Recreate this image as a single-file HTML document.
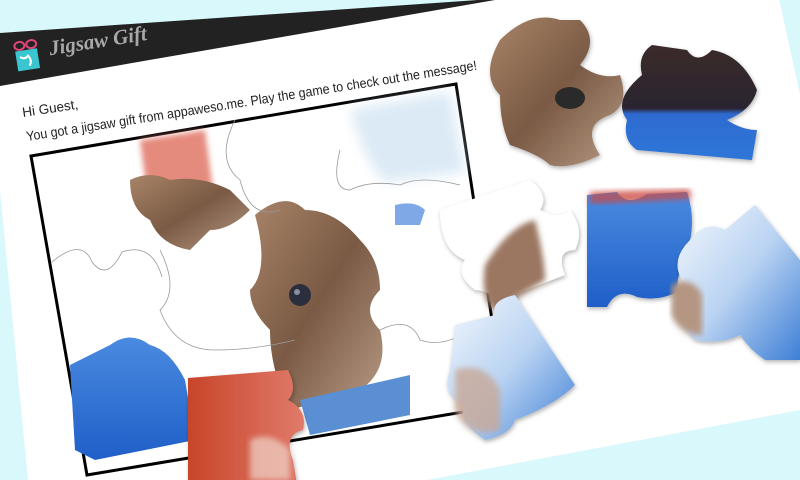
<!DOCTYPE html>
<html><head><meta charset="utf-8"><style>
html,body{margin:0;padding:0;width:800px;height:480px;overflow:hidden;background:#d9f8fb}
svg{display:block}
</style></head><body>
<svg width="800" height="480" viewBox="0 0 800 480" xmlns="http://www.w3.org/2000/svg">
<defs>
<filter id="b3"><feGaussianBlur stdDeviation="3"/></filter>
<filter id="b6"><feGaussianBlur stdDeviation="6"/></filter>
<filter id="sh" x="-20%" y="-20%" width="140%" height="140%"><feDropShadow dx="1" dy="2" stdDeviation="2" flood-opacity="0.3"/></filter>
<linearGradient id="red" x1="0" y1="0" x2="1" y2="0"><stop offset="0" stop-color="#c8452a"/><stop offset="1" stop-color="#e07a6a"/></linearGradient>
<linearGradient id="blue" x1="0" y1="0" x2="0" y2="1"><stop offset="0" stop-color="#4a8ae0"/><stop offset="1" stop-color="#1f5fc8"/></linearGradient>
<linearGradient id="lb" x1="0" y1="0" x2="1" y2="1"><stop offset="0" stop-color="#f4f8fd"/><stop offset="0.5" stop-color="#b9d3f2"/><stop offset="1" stop-color="#3f7fd6"/></linearGradient>
<linearGradient id="cat" x1="0" y1="0" x2="1" y2="1"><stop offset="0" stop-color="#a88468"/><stop offset="0.5" stop-color="#7a5a44"/><stop offset="1" stop-color="#b89a84"/></linearGradient>
<linearGradient id="dark" x1="0" y1="0" x2="0" y2="1"><stop offset="0" stop-color="#3b2c2a"/><stop offset="0.55" stop-color="#2a2430"/><stop offset="0.6" stop-color="#2f6bd0"/><stop offset="1" stop-color="#2f76d8"/></linearGradient>
</defs>
<!-- card -->
<polygon points="0,33 775,-20 800,95 800,410 427,480 28,480 0,190" fill="#fff"/>
<!-- header -->
<polygon points="0,33 478,0 495,0 0,86" fill="#222"/>
<!-- logo -->
<g transform="translate(26,56) rotate(-9)">
<rect x="-10" y="-6" width="22" height="20" fill="#39c6cf"/>
<path d="M-6,0 q4,4 8,0 q4,6 0,10" stroke="#fff" stroke-width="2" fill="none"/>
<ellipse cx="-5" cy="-11" rx="5" ry="4" fill="none" stroke="#e2457a" stroke-width="2"/>
<ellipse cx="7" cy="-11" rx="5" ry="4" fill="none" stroke="#e2457a" stroke-width="2"/>
<text x="24" y="3" font-family="Liberation Serif, serif" font-style="italic" font-weight="bold" font-size="21" fill="#a8a8a8">Jigsaw Gift</text>
</g>
<!-- text -->
<text transform="translate(23,117) rotate(-8.5)" font-family="Liberation Sans, sans-serif" font-size="13.5" fill="#222">Hi Guest,</text>
<text transform="translate(27,141) rotate(-9)" font-family="Liberation Sans, sans-serif" font-size="13.5" fill="#222" textLength="456" lengthAdjust="spacingAndGlyphs">You got a jigsaw gift from appaweso.me. Play the game to check out the message!</text>
<!-- frame -->
<polygon points="31,156 456,84 505,405 87,475" fill="#fff" stroke="#000" stroke-width="3"/>
<!-- image parts inside frame -->
<g>
<path d="M140,140 L205,130 L215,205 L150,215 Z" fill="#e58b7e" filter="url(#b3)"/>
<path d="M130,180 q20,-10 40,0 q30,-5 60,10 l20,20 q-20,20 -40,20 l-20,20 q-30,-5 -40,-30 q-20,-10 -20,-40z" fill="url(#cat)"/>
<path d="M255,215 q30,-25 50,-5 q30,0 55,30 q20,20 20,50 q-20,20 0,40 q10,40 -20,60 l-70,20 q-20,-40 -20,-80 q-20,-20 -20,-40 q20,-20 5,-75z" fill="url(#cat)"/>
<circle cx="300" cy="295" r="11" fill="#2b2f3d"/>
<circle cx="297" cy="292" r="3" fill="#8a8fa0"/>
<path d="M70,365 q30,-15 40,-20 q20,-15 40,0 q20,5 35,35 l10,60 l-100,20 l-20,-10z" fill="url(#blue)"/>
<path d="M300,400 l110,-25 l0,40 l-100,20z" fill="#5a8fd3"/>
<path d="M350,110 l100,-18 l15,80 l-80,10 q-20,-20 -35,-72z" fill="#dceaf5" filter="url(#b6)"/>
<path d="M395,205 q20,-5 30,5 l-5,15 l-25,0z" fill="#7fa8e6"/>
<g fill="none" stroke="#999" stroke-width="0.8">
<path d="M52,262 q30,-25 40,0 q15,20 30,-10 q30,-10 40,25"/>
<path d="M235,120 q-20,40 5,60 q10,40 40,30"/>
<path d="M340,150 q-10,40 10,40 q20,-10 50,-5 q20,-10 60,0"/>
<path d="M160,250 q20,40 0,60 q15,40 55,40 q40,0 80,-10"/>
<path d="M380,330 q30,-15 40,10 q30,10 60,-20"/>
</g>
</g>
<!-- red piece -->
<g filter="url(#sh)">
<path d="M188,378 l100,-8 q10,20 0,30 q20,10 15,30 q-20,5 -10,30 l5,30 l-110,0 z" fill="url(#red)"/>
<path d="M250,440 q20,-10 40,10 l0,30 l-40,0z" fill="#f0d6cc" opacity="0.7" filter="url(#b3)"/>
</g>
<!-- loose pieces -->
<g filter="url(#sh)">
<path d="M440,210 l90,-30 q20,15 10,30 q20,10 30,0 q15,20 5,40 q-20,0 -10,25 l-65,25 q-15,-10 -25,-10 q-20,-15 -10,-30 q-25,-10 -25,-50z" fill="#fff"/>
<path d="M485,265 q25,-40 50,-45 q10,40 10,60 l-50,30 q-15,-10 -10,-45z" fill="#9b7762" filter="url(#b3)"/>
</g>
<g filter="url(#sh)">
<path d="M455,325 l40,-10 q-5,-15 20,-20 l60,90 q-20,20 -60,35 q-5,15 -30,20 q-30,-20 -20,-35 q-25,-10 -15,-35z" fill="url(#lb)"/>
<path d="M455,370 q30,-10 45,20 l0,40 q-30,10 -45,-20z" fill="#c8a898" filter="url(#b3)" opacity="0.8"/>
</g>
<g filter="url(#sh)">
<path d="M500,40 q30,-30 60,-20 l20,0 q20,20 0,45 q20,15 40,10 q10,30 -10,40 q-30,10 -10,40 q-30,15 -50,10 q-10,-10 -40,-20 q-10,-20 -10,-50 q-20,-20 0,-55z" fill="url(#cat)"/>
<ellipse cx="570" cy="98" rx="15" ry="11" fill="#2c2a2a"/>
</g>
<g filter="url(#sh)">
<path d="M652,45 l35,5 q10,15 25,0 q30,5 45,40 q-5,20 -30,30 q15,10 30,10 l-5,30 l-115,-10 q-15,-10 -10,-30 q-15,-20 15,-45 q-5,-20 10,-30z" fill="url(#dark)"/>
</g>
<g filter="url(#sh)">
<path d="M587,195 l30,-3 q10,15 30,2 l40,-2 q10,30 0,60 q-10,20 -10,40 q-20,10 -40,5 q-20,-10 -30,10 l-20,0z" fill="url(#blue)"/>
<path d="M590,192 l100,-3 l0,10 l-100,5z" fill="#d2453a" filter="url(#b3)" opacity="0.7"/>
</g>
<g filter="url(#sh)">
<path d="M690,240 q15,-20 35,-10 l30,-25 l45,55 l0,100 l-35,0 q-15,-10 -25,-25 q-20,10 -45,5 q-25,-20 -5,-50 q-25,-25 0,-50z" fill="url(#lb)"/>
<path d="M672,285 q20,-10 30,10 l0,40 q-20,0 -30,-20z" fill="#b59682" filter="url(#b3)"/>
</g>
</svg>
</body></html>
